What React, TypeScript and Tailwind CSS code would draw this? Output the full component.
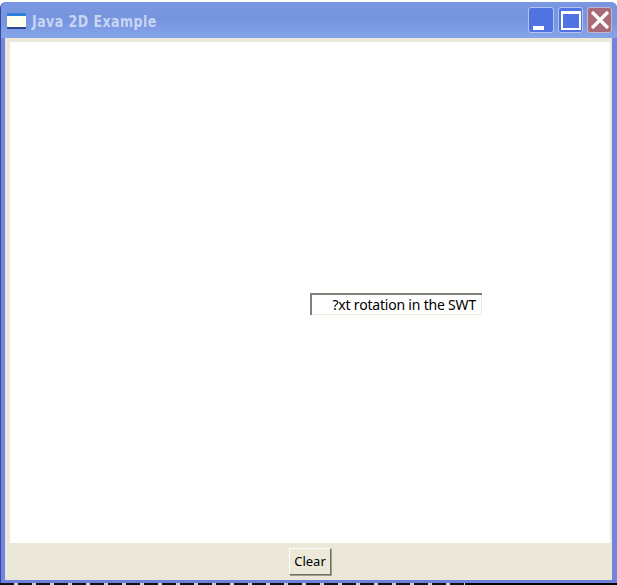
function WindowIcon() {
  return (
    <div className="w-[19px] h-[16px] flex flex-col rounded-[1px] border-b-2 border-b-[#2c4494]">
      <div className="h-[3px] bg-[#2f7fe0]" />
      <div className="flex-1 bg-[#fdfdf0]" />
    </div>
  );
}

function App() {
  return (
    <div className="w-[617px] h-[585px] overflow-hidden flex flex-col bg-white font-['Noto_Sans',sans-serif]">
      {/* desktop strip behind the window */}
      <div className="h-[2px] bg-white" />

      <div className="h-[581px] flex flex-col rounded-t-[6px] border-l border-l-[#34489f] bg-[#7285dc]">
        {/* Title bar */}
        <div className="h-[36px] pt-[2px] flex items-center pl-[6px] pr-[3px] rounded-t-[6px] bg-gradient-to-b from-[#7a98e2] via-[#7795df] to-[#85a5ea]">
          <WindowIcon />
          <span className="ml-[6px] mt-[3px] text-[15px] font-bold text-[#c8d5f3] tracking-[0.5px] font-['DejaVu_Sans',sans-serif] [font-stretch:condensed] scale-x-[0.93] origin-left">
            Java 2D Example
          </span>
          <div className="ml-auto flex gap-[4px] mr-[2px] mt-[-2px]">
            <div className="w-[26px] h-[26px] rounded-[3px] border border-[#b4c4ee] bg-[#4f74e2] flex items-end pl-[4px] pb-[2px]">
              <div className="w-[11px] h-[4px] bg-white" />
            </div>
            <div className="w-[25px] h-[26px] rounded-[3px] border border-[#b4c4ee] bg-[#4f74e2] flex items-center justify-center">
              <div className="w-[20px] h-[19px] border-2 border-white border-t-[3px]" />
            </div>
            <div className="w-[25px] h-[26px] rounded-[3px] border border-[#c4b4cc] bg-[#a96a78] flex items-center justify-center">
              <svg width="20" height="20" viewBox="0 0 20 20">
                <path d="M2 2 L18 18 M18 2 L2 18" stroke="#fff" strokeWidth="3.2" fill="none" />
              </svg>
            </div>
          </div>
        </div>

        {/* Window body */}
        <div className="h-[542px] ml-[4px] mr-[5px] flex flex-col bg-[#ebe8d9] pt-[4px]">
          <div className="relative h-[501px] ml-[5px] mr-[2px] bg-white">
            <div className="absolute left-[300px] top-[251px] w-[172px] h-[22px] border-t-2 border-l-2 border-[#808078] shadow-[inset_0_-1px_0_#ece9d8,inset_-1px_0_0_#ece9d8] flex items-center justify-end pr-[6px]">
              <span className="mb-[2px] text-[14px] text-black tracking-[-0.2px] whitespace-nowrap">?xt rotation in the SWT</span>
            </div>
          </div>

          <div className="h-[37px] pl-[3px] flex items-center justify-center">
            <button className="w-[42px] h-[27px] bg-[#ece9d8] border border-t-white border-l-white border-r-[#716f64] border-b-[#716f64] shadow-[1px_1px_0_#a09e90] text-[13px] text-black">
              Clear
            </button>
          </div>
        </div>

        <div className="h-[3px] bg-[#6f7fdc]" />
      </div>

      {/* desktop strip below the window */}
      <div className="h-[2px] flex">
        <div className="w-[465px] bg-[repeating-linear-gradient(90deg,#111_0,#111_14px,#c8cce8_14px,#c8cce8_18px)]" />
        <div className="flex-1 bg-black" />
      </div>
    </div>
  );
}

export default App;
